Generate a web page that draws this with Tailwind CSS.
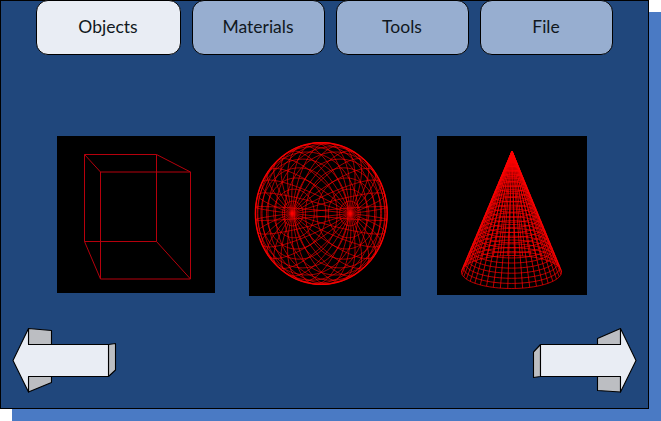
<!DOCTYPE html>
<html lang="en">
<head>
<meta charset="utf-8">
<title>Objects</title>
<script src="https://cdn.jsdelivr.net/npm/@tailwindcss/browser@4"></script>
</head>
<body class="h-[421px] w-[661px] overflow-hidden bg-white font-['Lato',sans-serif]">
<div class="grid h-full w-full">
  <div class="col-start-1 row-start-1 mt-3 ml-3 bg-[#4a7ac4]"></div>
  <main class="relative col-start-1 row-start-1 flex h-[409px] w-[649px] flex-col border border-black bg-[#20477c]">
    <nav class="-mt-px flex gap-[11px] pl-[35px] text-[17.5px] text-[#101820]">
      <button class="h-[55px] w-[145px] rounded-[12px] border border-black bg-[#e9edf4] pr-px">Objects</button>
      <button class="h-[55px] w-[133px] rounded-[12px] border border-black bg-[#97aed0] pr-px">Materials</button>
      <button class="h-[55px] w-[133px] rounded-[12px] border border-black bg-[#97aed0] pr-px">Tools</button>
      <button class="h-[55px] w-[133px] rounded-[12px] border border-black bg-[#97aed0] pr-px">File</button>
    </nav>
    <section class="mt-[81px] flex items-start pl-14">
      <svg class="h-[157px] w-[158px] bg-black" viewBox="57 136 158 157" fill="none" stroke="#b5000c" stroke-width="1">
        <path d="M84.500 154.500H156.500V241.500H84.500ZM100.500 172H190.500V279H100.500ZM84.500 154.500L100.500 172M156.500 154.500L190.500 172M84.500 241.500L100.500 279M156.500 241.500L190.500 279"/>
      </svg>
      <svg id="sphere" class="ml-[34px] h-[160px] w-[152px] bg-black" viewBox="249 136 152 160" fill="none" stroke="#ff0000"></svg>
      <svg id="cone" class="ml-9 h-[159px] w-[150px] bg-black" viewBox="437 136 150 159" fill="none" stroke="#ff0000"></svg>
    </section>
    <div class="mt-[31px] flex justify-between pr-[10px] pl-[11px]">
      <svg class="h-[68px] w-[106px]" viewBox="12 327 106 68" stroke="#000" stroke-width="1.1" stroke-linejoin="round">
        <path fill="#bcbec2" d="M28.500 328.500L51.500 330.500V345H28.500ZM28.500 376.500H51.500V382.500L28.500 392ZM108.500 344.500L115.500 343.500V370L108.500 376.500Z"/>
        <path fill="#e9edf4" d="M13 360.500L28.500 328.500V344.500H108.500V376.500H28.500V392Z"/>
      </svg>
      <svg class="h-[68px] w-[106px]" viewBox="532 327 106 68" stroke="#000" stroke-width="1.1" stroke-linejoin="round">
        <path fill="#bcbec2" d="M620.500 328.500L597.500 338.500V344.500H620.500ZM597.500 376.500H620.500V392L597.500 390.500ZM540.500 344.500L533.500 352V377.500L540.500 376.500Z"/>
        <path fill="#e9edf4" d="M636 360.500L620.500 328.500V344.500H540.500V376.500H620.500V392Z"/>
      </svg>
    </div>
  </main>
</div>
<script>
const TAU = Math.PI * 2;
const path = (points) => 'M' + points.map(p => p[0].toFixed(2) + ' ' + p[1].toFixed(2)).join('L');
const draw = (id, d, width, opacity) => {
  const el = document.createElementNS('http://www.w3.org/2000/svg', 'path');
  el.setAttribute('d', d);
  el.setAttribute('stroke-width', width);
  el.setAttribute('stroke-opacity', opacity);
  document.getElementById(id).appendChild(el);
};
const curve = (fn) => path(Array.from({ length: 97 }, (_, i) => fn(i / 96 * TAU)));

// Sphere: both poles visible through the mesh
const point = (t, f) => [321.3 + 66 * (0.44 * Math.cos(t) + 0.898 * Math.sin(t) * Math.cos(f)),
                         213.5 + 71 * Math.sin(t) * Math.sin(f)];
for (let i = 1; i < 18; i++) draw('sphere', curve(f => point(i * Math.PI / 18, f)), 0.9, 0.72);
for (let i = 0; i < 16; i++) draw('sphere', curve(t => point(t, (i + 0.5) * Math.PI / 16)), 0.9, 0.72);
draw('sphere', curve(a => [321.3 + 66 * Math.cos(a), 213.5 + 71 * Math.sin(a)]), 1.2, 0.9);

// Cone: rings stacked from the apex, with straight sides
const rim = (s, a) => [512 - 0.5 * s + 50 * s * Math.cos(a), 151 + 121 * s + 16.5 * s * Math.sin(a)];
for (let i = 1; i <= 27; i++) draw('cone', curve(a => rim(i / 27, a)), 0.9, 0.8);
for (let i = 0; i < 42; i++) draw('cone', path([[512, 151], rim(1, i / 42 * TAU)]), 0.9, 0.8);
</script>
</body>
</html>
